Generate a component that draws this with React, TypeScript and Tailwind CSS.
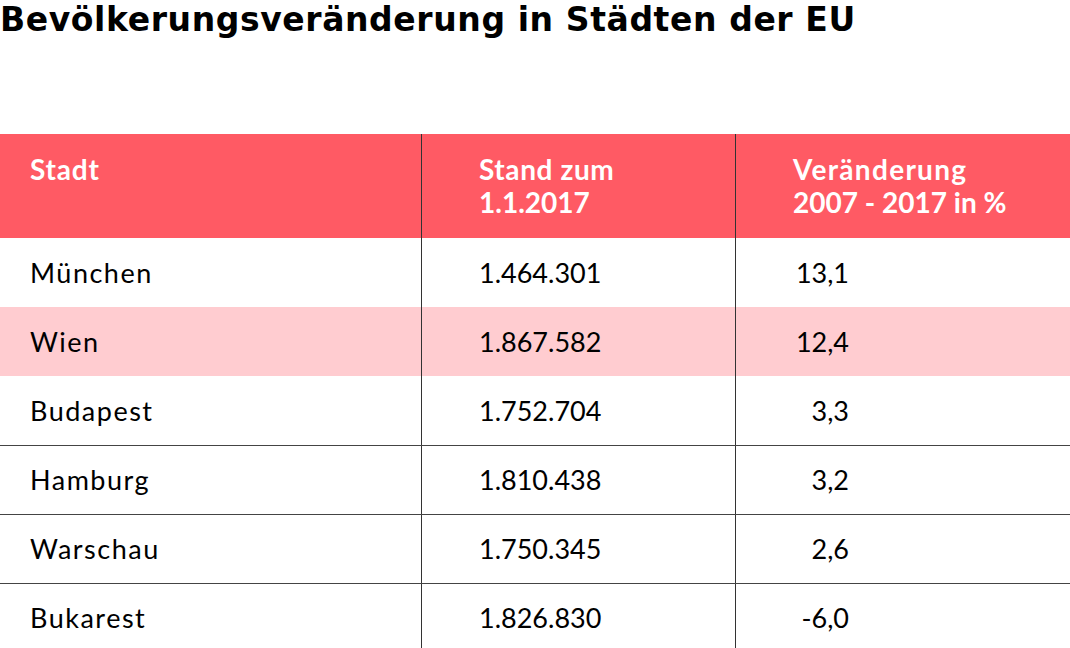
const rows = [
  { city: "München", count: "1.464.301", change: "13,1", pink: false, line: false },
  { city: "Wien", count: "1.867.582", change: "12,4", pink: true, line: false },
  { city: "Budapest", count: "1.752.704", change: "3,3", pink: false, line: false },
  { city: "Hamburg", count: "1.810.438", change: "3,2", pink: false, line: true },
  { city: "Warschau", count: "1.750.345", change: "2,6", pink: false, line: true },
  { city: "Bukarest", count: "1.826.830", change: "-6,0", pink: false, line: true },
];

export default function App() {
  return (
    <div className="h-[648px] w-[1070px] overflow-hidden bg-white font-['Lato',sans-serif] text-black">
      <h1 className="h-[134px] pt-[2px] font-['DejaVu_Sans',sans-serif] text-[33px] leading-[35px] font-bold tracking-[0.6px]">
        Bevölkerungsveränderung in Städten der EU
      </h1>

      <div className="flex h-[104px] bg-[#ff5a64] text-[28px] leading-[33px] font-bold text-white">
        <div className="w-[421px] pt-[19px] pl-[30px] tracking-[0.8px]">Stadt</div>
        <div className="w-[314px] border-l border-[#333] pt-[19px] pl-[57px]">
          <span className="tracking-[0.6px]">Stand zum</span>
          <br />
          1.1.2017
        </div>
        <div className="flex-1 border-l border-[#333] pt-[19px] pl-[57px]">
          <span className="tracking-[1.3px]">Veränderung</span>
          <br />
          2007 - 2017 in %
        </div>
      </div>

      {rows.map((r) => (
        <div
          key={r.city}
          className={`flex h-[69px] text-[27px] leading-[30px] ${r.pink ? "bg-[#ffccd0]" : "bg-white"} ${
            r.line ? "border-t border-[#444]" : ""
          }`}
        >
          <div className="flex w-[421px] items-center pl-[30px] tracking-[1.5px]">{r.city}</div>
          <div className="flex w-[314px] items-center border-l border-[#333] pl-[57px]">{r.count}</div>
          <div className="flex flex-1 items-center border-l border-[#333] pl-[57px]">
            <span className="inline-block w-[56px] text-right">{r.change}</span>
          </div>
        </div>
      ))}
    </div>
  );
}
